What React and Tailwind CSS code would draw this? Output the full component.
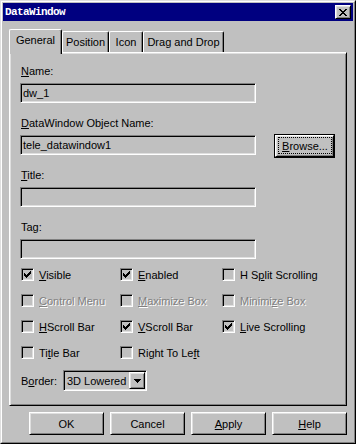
import React from "react";

const raised =
  "bg-[#c0c0c0] border border-t-white border-l-white border-r-black border-b-black shadow-[inset_1px_1px_#dfdfdf,inset_-1px_-1px_#808080]";
const sunken =
  "bg-[#c0c0c0] border border-t-[#808080] border-l-[#808080] border-r-white border-b-white shadow-[inset_1px_1px_#000,inset_-1px_-1px_#dfdfdf]";

function CheckMark() {
  return (
    <svg width="7" height="7" viewBox="0 0 7 7" shapeRendering="crispEdges">
      <path
        d="M0 2h1v3H0zM1 3h1v3H1zM2 4h1v3H2zM3 3h1v3H3zM4 2h1v3H4zM5 1h1v3H5zM6 0h1v3H6z"
        fill="#000"
      />
    </svg>
  );
}

function Check({ checked, disabled, children }) {
  return (
    <div className="flex items-center h-[13px]">
      <div className={`w-[13px] h-[13px] shrink-0 flex items-center justify-center ${sunken}`}>
        {checked && <CheckMark />}
      </div>
      <span
        className={`ml-[5px] whitespace-nowrap ${
          disabled ? "text-[#808080] [text-shadow:1px_1px_0_#fff]" : ""
        }`}
      >
        {children}
      </span>
    </div>
  );
}

function Field({ value, className = "" }) {
  return (
    <div className={`w-[236px] h-[20px] flex items-center pl-[2px] ${sunken} ${className}`}>
      {value}
    </div>
  );
}

function Tab({ children, width }) {
  return (
    <div
      className={`h-[21px] ${width} flex justify-center pt-[3px] border-t border-l border-r border-t-white border-l-white border-r-black rounded-tl-[2px] rounded-tr-[2px] shadow-[inset_-1px_0_#808080]`}
    >
      {children}
    </div>
  );
}

export default function App() {
  return (
    <div className="w-[356px] h-[444px] bg-[#c0c0c0] border border-t-[#dfdfdf] border-l-[#dfdfdf] border-r-black border-b-black text-[11px] leading-[14px] text-black [font-family:'Liberation_Sans',Arial,sans-serif]">
      <div className="h-full border border-t-white border-l-white border-r-[#808080] border-b-[#808080] p-px flex flex-col">
        {/* Title bar */}
        <div className="h-[18px] bg-[#000080] flex items-center justify-between pl-[2px] pr-[2px]">
          <span className="text-white font-bold text-[11px] tracking-[-0.6px] [font-family:'Liberation_Mono',monospace]">
            DataWindow
          </span>
          <div className={`w-[16px] h-[14px] flex items-center justify-center ${raised}`}>
            <svg width="8" height="7" viewBox="0 0 8 7" shapeRendering="crispEdges">
              <path
                d="M0 0h2v1H0zM6 0h2v1H6zM1 1h2v1H1zM5 1h2v1H5zM2 2h4v1H2zM3 3h2v1H3zM2 4h4v1H2zM1 5h2v1H1zM5 5h2v1H5zM0 6h2v1H0zM6 6h2v1H6z"
                fill="#000"
              />
            </svg>
          </div>
        </div>

        {/* Tabs */}
        <div className="ml-[6px] mt-[8px] h-[23px] flex items-end">
          <div className="relative z-10 -mb-[2px] h-[25px] w-[53px] flex justify-center pt-[3px] bg-[#c0c0c0] border-t border-l border-r border-t-white border-l-white border-r-black rounded-tl-[2px] rounded-tr-[2px] shadow-[inset_-1px_0_#808080]">
            General
          </div>
          <Tab width="w-[47px]">Position</Tab>
          <Tab width="w-[34px]">Icon</Tab>
          <Tab width="w-[81px]">Drag and Drop</Tab>
        </div>

        {/* Panel */}
        <div
          className={`ml-[6px] w-[338px] h-[354px] pl-[10px] flex flex-col border border-t-white border-l-white border-r-black border-b-black shadow-[inset_1px_1px_#dfdfdf,inset_-1px_-1px_#808080]`}
        >
          <div className="mt-[11px] ml-[1px]">
            <u>N</u>ame:
          </div>
          <Field value="dw_1" className="mt-[5px]" />

          <div className="mt-[13px] ml-[1px]">
            <u>D</u>ataWindow Object Name:
          </div>
          <div className="mt-[4px] flex items-start">
            <Field value="tele_datawindow1" className="mt-[1px]" />
            <div className="ml-[18px] w-[61px] h-[24px] border border-black flex">
              <div className={`flex-1 flex pl-[2px] pr-[1px] pt-[1px] pb-[2px] ${raised}`}>
                <div className="flex-1 border border-dotted border-black flex items-center justify-center">
                  <span>
                    <u>B</u>rowse...
                  </span>
                </div>
              </div>
            </div>
          </div>

          <div className="mt-[10px] ml-[1px]">
            <u>T</u>itle:
          </div>
          <Field value="" className="mt-[5px]" />

          <div className="mt-[13px] ml-[1px]">Tag:</div>
          <Field value="" className="mt-[5px]" />

          <div className="mt-[9px] ml-[1px] grid grid-cols-[99px_102px_1fr] gap-y-[13px]">
            <Check checked>
              <u>V</u>isible
            </Check>
            <Check checked>
              <u>E</u>nabled
            </Check>
            <Check>
              H S<u>p</u>lit Scrolling
            </Check>

            <Check disabled>
              <u>C</u>ontrol Menu
            </Check>
            <Check disabled>
              <u>M</u>aximize Box
            </Check>
            <Check disabled>
              Minimi<u>z</u>e Box
            </Check>

            <Check>
              <u>H</u>Scroll Bar
            </Check>
            <Check checked>
              <u>V</u>Scroll Bar
            </Check>
            <Check checked>
              <u>L</u>ive Scrolling
            </Check>

            <Check>
              Ti<u>t</u>le Bar
            </Check>
            <Check>
              Right To Le<u>f</u>t
            </Check>
            <div />
          </div>

          <div className="mt-[11px] ml-[1px] flex items-center">
            <div className="w-[42px]">
              B<u>o</u>rder:
            </div>
            <div className={`w-[84px] h-[21px] flex items-center ${sunken}`}>
              <span className="pl-[3px] flex-1 whitespace-nowrap">3D Lowered</span>
              <div className={`w-[16px] h-[17px] mr-px flex items-center justify-center ${raised}`}>
                <svg width="7" height="4" viewBox="0 0 7 4" shapeRendering="crispEdges">
                  <path d="M0 0h7v1H0zM1 1h5v1H1zM2 2h3v1H2zM3 3h1v1H3z" fill="#000" />
                </svg>
              </div>
            </div>
          </div>
        </div>

        {/* Buttons */}
        <div className="mt-[6px] ml-[26px] flex gap-[6px]">
          <div className={`w-[75px] h-[23px] flex items-center justify-center ${raised}`}>OK</div>
          <div className={`w-[75px] h-[23px] flex items-center justify-center ${raised}`}>Cancel</div>
          <div className={`w-[75px] h-[23px] flex items-center justify-center ${raised}`}>
            <span>
              <u>A</u>pply
            </span>
          </div>
          <div className={`w-[75px] h-[23px] flex items-center justify-center ${raised}`}>
            <span>
              <u>H</u>elp
            </span>
          </div>
        </div>
      </div>
    </div>
  );
}
